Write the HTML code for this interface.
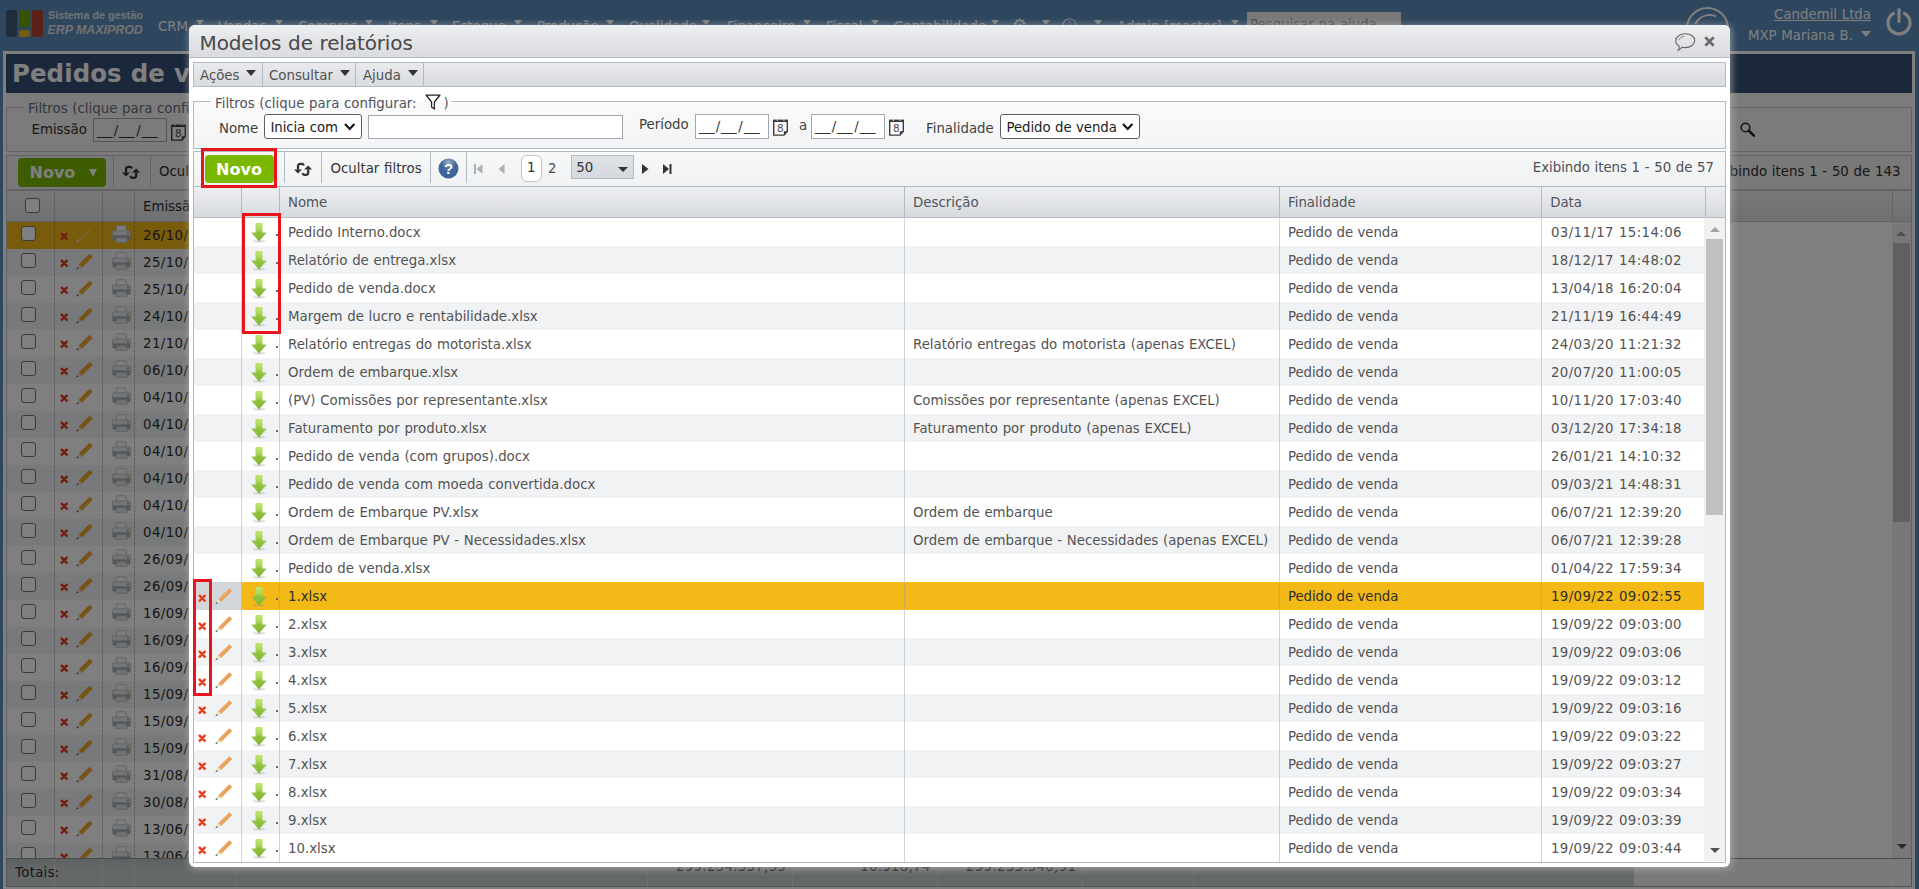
<!DOCTYPE html>
<html lang="pt-BR"><head><meta charset="utf-8"><title>Modelos de relatórios</title>
<style>
*{box-sizing:border-box;margin:0;padding:0}
html,body{width:1919px;height:889px;overflow:hidden}
body{position:relative;background:#5c8dbd;font-family:"DejaVu Sans",Verdana,"Liberation Sans",sans-serif;font-size:13.33px;color:#535353;word-spacing:.45px}
.ic{position:absolute;overflow:visible}
.abs{position:absolute}
/* ---------- background page ---------- */
#bg{position:absolute;left:0;top:0;width:1919px;height:889px;overflow:hidden}
#logo{position:absolute;left:6px;top:9px;width:38px;height:30px}
.lg1{position:absolute;left:48px;top:9px;font:bold 10.800px "Liberation Sans",sans-serif;color:#e4e4e4;white-space:nowrap;word-spacing:0}
.lg2{position:absolute;left:47.500px;top:23px;font:italic bold 12.400px "Liberation Sans",sans-serif;color:#e4e4e4;white-space:nowrap;word-spacing:0}
#nav{position:absolute;left:158px;top:18.500px;height:20px;white-space:nowrap;color:#fff;font-size:13.33px}
#nav span{position:absolute;top:0}
#nav i{position:absolute;top:1px;width:0;height:0;border-left:4.500px solid transparent;border-right:4.500px solid transparent;border-top:5px solid #fff}
#hsearch{position:absolute;left:1247px;top:12px;width:154px;height:24px;background:#f3f3f3;color:#999;font-size:13.33px;padding:5px 3px 0 3px}
#hcirc{position:absolute;left:1686px;top:7px;width:43px;height:43px;border:2px solid #fff;border-radius:50%}
#hcirc:after{content:"";position:absolute;left:5px;top:5px;width:29px;height:29px;border:2px solid transparent;border-top-color:#fff;border-radius:50%;transform:rotate(-20deg)}
#hcomp{position:absolute;right:48px;top:7px;color:#fff;text-decoration:underline;white-space:nowrap}
#huser{position:absolute;right:66px;top:28px;color:#fff;white-space:nowrap}
#hcaret{position:absolute;left:1861px;top:31px;width:0;height:0;border-left:5px solid transparent;border-right:5px solid transparent;border-top:6px solid #fff}
#panel{position:absolute;left:3px;top:51px;width:1912px;height:838px;border:3px solid #fff;border-right-width:2px;background:#f7f7f7}
#ptitle{position:absolute;left:0;top:0;width:1906px;height:39px;background:#365077;color:#fff;font-weight:bold;font-size:24.400px;line-height:39px;padding-left:6px;white-space:nowrap;letter-spacing:.1px}
.bfs{position:absolute;left:0px;top:53px;width:1906px;height:45px;border:1px solid #c6c6c6}
.bleg{position:absolute;left:17px;top:-7px;background:#f7f7f7;padding:0 4px;white-space:nowrap;color:#666d7b}
.btool{position:absolute;left:0px;top:101px;width:1906px;height:35px;border:1px solid #c5c5c5;background:#f3f3f4}
.bnovo{position:absolute;left:11px;top:2px;width:88px;height:29px;background:#7ab800;border-radius:4px;color:#fff;font-weight:bold;font-size:16px;line-height:29px;padding-left:11.5px}
.bnovo i{position:absolute;left:71px;top:11px;border-left:4.5px solid transparent;border-right:4.5px solid transparent;border-top:8px solid #fff;width:0;height:0}
.bsep{position:absolute;top:0;width:1px;height:31px;background:#c5c5c5}
.bhead{position:absolute;left:0px;top:136px;width:1906px;height:32px;border:1px solid #c5c5c5;background:linear-gradient(#f1f1f3,#dcdee2);}
.bhead b{position:absolute;top:0;width:1px;height:31px;background:#c5c5c5}
.bchk{position:absolute;left:14px;top:4px;width:15px;height:15px;border:1.5px solid #767676;border-radius:3px;background:#fff}
.bbody{position:absolute;left:0px;top:168px;width:1906px;height:636px;overflow:hidden;background:#fff;border-left:1px solid #c5c5c5;border-right:1px solid #c5c5c5}
.brow{position:absolute;left:0;width:1700px;height:27px;background:#fff}
.brow.balt{background:#f1f2f4}
.brow.bsel{background:#f3b917}
.bdate{position:absolute;left:136px;top:6px;white-space:nowrap;color:#2e2e2e;letter-spacing:.4px}
.bcols b{position:absolute;top:0;width:0;height:640px;border-left:1px dotted rgba(40,40,40,.42)}
.bfoot{position:absolute;left:0px;top:804px;width:1906px;height:29px;background:#f3f7f7;border:1px solid #a4a9a9;border-top-color:#8f9494;color:#2e2e2e}
.bft{position:absolute;left:0;top:0;width:1627px;height:27px;background:linear-gradient(#bcc2c2,#cad0d0 35%,#ccd2d2)}
.bfoot span{position:absolute;top:6px;white-space:nowrap;letter-spacing:.3px}
.bfoot b{position:absolute;top:0;width:0;height:28px;border-left:1px dotted rgba(255,255,255,.55)}
#ovl{position:absolute;left:0;top:0;width:1919px;height:889px;background:rgba(0,0,0,.5)}
/* ---------- dialog ---------- */
#dlg{position:absolute;left:189px;top:25px;width:1541px;height:842px;background:#fff;border-radius:6px;box-shadow:1px 1px 7px 1px rgba(190,190,190,.6)}
#tbar{position:absolute;left:0;top:0;width:1541px;height:33px;border-radius:6px 6px 0 0;background:linear-gradient(#eeeff0,#e4e5e8 45%,#d9dbdf);border-bottom:1px solid #b4bac3}
#ttl{position:absolute;left:10.500px;top:5px;font-size:20px;line-height:26px;color:#484848;white-space:nowrap;letter-spacing:-.12px}
#mbar{position:absolute;left:4px;top:37px;width:1533px;height:25px;border:1px solid #b4bac3;background:linear-gradient(#e9eaed,#d8dbdf)}
#mbar span{position:absolute;top:5px;white-space:nowrap;color:#505050}
#mbar i{position:absolute;top:7px;width:0;height:0;border-left:5.5px solid transparent;border-right:5.5px solid transparent;border-top:6px solid #333}
#mbar b{position:absolute;top:0;width:1px;height:23px;background:#b4bac3}
#fs{position:absolute;left:4px;top:76px;width:1533px;height:48px;border:1px solid #b4bac3;background:linear-gradient(#fafafb,#f3f4f5)}
#leg{position:absolute;left:17px;top:-6px;height:18px;background:linear-gradient(#fff 0,#fff 6px,rgba(255,255,255,0) 6px);padding:0 2.500px 0 4px;white-space:nowrap;color:#4f545d}
.lbl{position:absolute;white-space:nowrap;color:#3f3f3f}
.sl{position:absolute;height:25px;border:1px solid #5f5f5f;border-radius:3px;background:#fff;color:#1c1c1c;padding:4.500px 0 0 5.500px;white-space:nowrap;letter-spacing:-.1px}
.inp{position:absolute;height:25px;border:1px solid #a3a8b0;background:#fff;color:#333;white-space:nowrap;padding:2px 0 0 3px}
#tool{position:absolute;left:4px;top:126px;width:1533px;height:36px;border:1px solid #b4bac3;border-bottom:0;background:linear-gradient(#f7f8f8,#f0f1f2)}
#tool b{position:absolute;top:0;width:1px;height:31px;background:#b4bac3}
#novo{position:absolute;left:11px;top:3px;width:69px;height:28px;background:#7ab800;border-radius:4px;color:#fff;font-weight:bold;font-size:16px;line-height:29px;text-align:center;letter-spacing:.1px;text-indent:-1px}
#ocf{position:absolute;left:136.500px;top:9px;white-space:nowrap;color:#333}
#pgi{position:absolute;right:11px;top:8px;white-space:nowrap;color:#4c4f55;letter-spacing:-.02px}
#pg1{position:absolute;left:327px;top:3px;width:20.500px;height:27px;border:1px solid #c5c5c5;border-radius:6px;background:#fff;text-align:center;line-height:24px;color:#333}
#pg2{position:absolute;left:354px;top:8.500px;color:#4c4f55}
#pdd{position:absolute;left:377.300px;top:3px;width:62.700px;height:24px;border:1px solid #b4bac3;background:linear-gradient(#e0e2e6,#d5d8dd);color:#333;padding:4px 0 0 4px}
#pdd i{position:absolute;left:46px;top:11px;width:0;height:0;border-left:5.200px solid transparent;border-right:5.200px solid transparent;border-top:5px solid #333}
#ghead{position:absolute;left:4px;top:161px;width:1533px;height:32px;border:1px solid #b4bac3;background:linear-gradient(#edeef0,#e3e5e8 50%,#d6d9de);}
#ghead span{position:absolute;top:8px;white-space:nowrap;color:#4f545d}
#ghead b{position:absolute;top:0;width:1px;height:30px;background:#b4bac3}
#gbody{position:absolute;left:4px;top:193px;width:1533px;height:645px;border:1px solid #b4bac3;border-top:0;overflow:hidden;background:#fff}
.row{position:absolute;left:0;width:1510px;height:28px;background:#fff}
.row.alt{background:#f1f2f4}
.row.sel{background:#f3b917;color:#2e2e2e}
.row.sel .c1{background:#d3d6db}
.c{position:absolute;top:0;height:28px;line-height:30px;white-space:nowrap;overflow:hidden;padding-left:8px}
.c1{left:0;width:48px;padding:0}
.c2{left:48px;width:38px;padding:0}
.c3{left:86px;width:625px}
.c4{left:711px;width:375px}
.c5{left:1086px;width:262px;letter-spacing:-.1px}
.c6{left:1348px;width:162px;letter-spacing:.38px;padding-left:9px}
.dot{position:absolute;left:33.700px;top:16px;width:2px;height:2px;background:#6a6a6a}
#gcols b{position:absolute;top:0;width:1px;height:644px;background:rgba(150,157,170,.45)}
#sbar{position:absolute;left:1510px;top:0;width:21px;height:643px;background:#f1f1f1}
#sthumb{position:absolute;left:2px;top:21px;width:17px;height:276px;background:#c1c1c1}
.sup{position:absolute;left:5.500px;top:8.500px;width:0;height:0;border-left:5px solid transparent;border-right:5px solid transparent;border-bottom:5.5px solid #a3a3a3}
.sdn{position:absolute;left:5.500px;bottom:8px;width:0;height:0;border-left:5px solid transparent;border-right:5px solid transparent;border-top:5.5px solid #505050}
.red{position:absolute;border:3px solid #e8141c}

.us{display:inline-block;transform:scaleX(1.17);transform-origin:0 50%;margin-right:2.500px}
.sls{display:inline-block;margin:0 1px 0 1px}

</style></head>
<body>
<svg width="0" height="0" style="position:absolute">
<defs>
<linearGradient id="gdn" x1="0" y1="0" x2="0" y2="1"><stop offset="0" stop-color="#c0e474"/><stop offset=".35" stop-color="#a9d658"/><stop offset=".52" stop-color="#92c443"/><stop offset="1" stop-color="#7fb431"/></linearGradient>
<radialGradient id="ghelp" cx=".5" cy=".2" r=".8"><stop offset="0" stop-color="#9fb0c4"/><stop offset=".45" stop-color="#41689a"/><stop offset="1" stop-color="#3a6496"/></radialGradient>
<g id="i-down"><ellipse cx="8" cy="18.300" rx="6.500" ry="1.100" fill="#8a8a8a" opacity=".35"/><path d="M4.500 0h7v9.500h4.300L8 18.500 .2 9.500h4.300z" fill="url(#gdn)"/></g>
<g id="i-x"><path d="M1.700 1.700l5 5M6.700 1.700l-5 5" stroke="#f3a25e" stroke-width="3.300" stroke-linecap="round" opacity=".4"/><path d="M1.700 1.700l5 5M6.700 1.700l-5 5" stroke="#e8311c" stroke-width="2.250" stroke-linecap="round"/><circle cx="4.200" cy="4.200" r=".9" fill="#b04a1a" opacity=".55"/></g>
<g id="i-pencil"><path d="M13.600 1.100l2.800 2.700L5.900 14.400 3 11.700z" fill="#e9a25c"/><path d="M5.200 11l7.500-7.600" stroke="#f4c27a" stroke-width=".8" stroke-dasharray="1.200 1.400"/><path d="M3 11.700l2.900 2.700L.5 16.300z" fill="#d9e8ad"/><path d="M.5 16.300l.7-2 1.400 1.400z" fill="#555"/></g>
<g id="i-pencil2"><path d="M13.600 1.100l2.800 2.700L5.900 14.400 3 11.700z" fill="#f2ab2a" stroke="#e89a45" stroke-width=".7"/><path d="M5 10.800l7.500-7.800" stroke="#d98f12" stroke-width=".9" stroke-dasharray="1.500 1"/><path d="M3 11.700l2.900 2.700L.5 16.300z" fill="#e4e0cc"/><path d="M.5 16.300l.7-2 1.400 1.400z" fill="#3a3a3a"/></g>
<g id="i-pencil3"><path d="M1 16L15.500 2" stroke="#f5e6c8" stroke-width="1.100" stroke-dasharray="2 1.200" opacity=".8"/><path d="M1 16l2.200-2.200" stroke="#eee" stroke-width="1.600"/></g>
<g id="i-print"><path d="M5 .8h9.500l.8 6H4.200z" fill="#fbfbfb" stroke="#b9bcc0" stroke-width=".8"/><path d="M1.800 6.200h16.400c.9 0 1.300.5 1.300 1.300v4H.5v-4c0-.8.400-1.300 1.300-1.300z" fill="#e6e8ea" stroke="#aeb2b6" stroke-width=".7"/><path d="M.5 11h19v4.200c0 .6-.4 1-1 1h-17c-.6 0-1-.4-1-1z" fill="#a9b0b5"/><path d="M4.800 13.300h10.400l1 5H3.800z" fill="#dfe2e4" stroke="#b4b8bc" stroke-width=".7"/><rect x="16" y="8" width="1.600" height="1.500" fill="#5fb336"/><rect x="16" y="10.300" width="1.600" height="1.500" fill="#f0a030"/></g>
<g id="i-refresh" fill="#333"><path d="M0 6.600h8L4 10.500z"/><path d="M4 6.700V3.200C4 1.500 5 .9 6.500 .9H8c1 0 1.500.7 1.800 1.600" fill="none" stroke="#333" stroke-width="2.250"/><path d="M10.100 6.400h8L14.100 2.500z"/><path d="M14.200 6.300v3.200c0 1.700-1 2.300-2.500 2.300H10.200c-1 0-1.500-.7-1.800-1.600" fill="none" stroke="#333" stroke-width="2.250"/></g>
<g id="i-cal"><path d="M.7 1.500h13.600v11l-3.300 3.600H.7z" fill="#fff" stroke="#3c3c3c" stroke-width="1.400"/><rect x="0" y=".8" width="15" height="2.200" fill="#3c3c3c"/><rect x="3.700" y="0" width="1.100" height="2" fill="#c9ced6"/><rect x="10.400" y="0" width="1.100" height="2" fill="#c9ced6"/><path d="M14.500 12.300h-3.700v3.900z" fill="#3c3c3c"/></g>
<g id="i-funnel"><path d="M1 1h14l-5.600 7v7L6.600 13V8z" fill="#fff" stroke="#222" stroke-width="1.250" stroke-linejoin="round"/></g>
<g id="i-chev"><path d="M1 1l4.7 5L10.4 1" fill="none" stroke="#111" stroke-width="2.1"/></g>
<g id="i-chat"><path d="M10.5 .8c5.3 0 9.3 3 9.3 6.8s-4.3 7-9.6 7c-1 0-2-.1-3-.4-1 1.200-2.400 2.300-4 3 .8-1.200 1.200-2.600 1.100-4C2 11.800.700 9.800.700 7.700.7 3.800 5.200.8 10.500.8z" fill="none" stroke="#666" stroke-width="1.1"/><path d="M3.800 7.200c.3-2 2.600-3.500 5.600-3.900" fill="none" stroke="#777" stroke-width=".9"/></g>
<g id="i-close"><path d="M1.300 1.300l8.400 8.400M9.700 1.300L1.300 9.700" stroke="#6a6a6a" stroke-width="2.700"/></g>
<g id="i-mag"><circle cx="5.500" cy="5.500" r="4.300" fill="none" stroke="#222" stroke-width="1.500"/><path d="M8.800 8.800l5 4.800" stroke="#222" stroke-width="2.600" stroke-linecap="round"/></g>
<g id="i-power"><path d="M7.500 5.300a11 11 0 1 0 11 0" fill="none" stroke="#fff" stroke-width="3.200" stroke-linecap="round"/><path d="M13 1.500v12" stroke="#fff" stroke-width="3.200" stroke-linecap="round"/></g>
</defs>
</svg>
<div id="bg">
  <svg id="logo" viewBox="0 0 38 30"><rect x="0" y="1" width="11" height="27" rx="2.5" fill="#3c5878"/><rect x="13" y="1" width="11" height="17.300" rx="2.500" fill="#6ea600"/><rect x="13" y="21" width="11" height="7" rx="2.500" fill="#f3b917"/><rect x="26" y="1" width="11" height="27" rx="2.5" fill="#b5452d"/></svg>
  <div class="lg1">Sistema de gestão</div>
  <div class="lg2">ERP MAXIPROD</div>
  <div id="nav">
    <span style="left:0px">CRM</span><i style="left:38.3px"></i>
    <span style="left:60px">Vendas</span><i style="left:116.5px"></i>
    <span style="left:140px">Compras</span><i style="left:206.5px"></i>
    <span style="left:230px">Itens</span><i style="left:271.5px"></i>
    <span style="left:294px">Estoque</span><i style="left:355.8px"></i>
    <span style="left:379px">Produção</span><i style="left:447.5px"></i>
    <span style="left:471px">Qualidade</span><i style="left:544.2px"></i>
    <span style="left:569px">Financeiro</span><i style="left:644.8px"></i>
    <span style="left:668px">Fiscal</span><i style="left:712.5px"></i>
    <span style="left:736px">Contabilidade</span><i style="left:833.2px"></i>
    <span style="left:854px;font-size:17px;top:-4px">⚙</span><i style="left:884.2px"></i>
    <span style="left:904px;font-size:15px;top:-2px">ⓘ</span><i style="left:935.8px"></i>
    <span style="left:959px">Admin [master]</span><i style="left:1072.5px"></i>
  </div>
  <div id="hsearch">Pesquisar na ajuda</div>
  <div id="hcirc"></div>
  <div id="hcomp">Candemil Ltda</div>
  <div id="huser">MXP Mariana B.</div>
  <div id="hcaret"></div>
  <svg class="ic" width="26" height="30" style="left:1886px;top:8px"><use href="#i-power"/></svg>
  <div id="panel">
    <div id="ptitle">Pedidos de venda</div>
    <div class="bfs"><div class="bleg">Filtros (clique para configurar:</div>
      <span class="lbl" style="left:24.500px;top:13.500px;color:#2e2e2e">Emissão</span>
      <div class="inp" style="left:86px;top:10px;width:74px;height:24px;background:#f7f7f7;padding-top:4px"><span class="us">__</span><span class="sls">/</span><span class="us">__</span><span class="sls">/</span><span class="us">__</span></div>
      <svg class="ic" width="15" height="17" style="left:163.7px;top:15.5px"><use href="#i-cal"/><text x="7.300" y="13.400" font-size="10.500" text-anchor="middle" fill="#4a4a4a" font-family="DejaVu Sans,sans-serif">8</text></svg>
      <svg class="ic" width="16" height="16" style="left:1733px;top:14px"><use href="#i-mag"/></svg>
      <div class="bsep" style="left:1722px;top:8px;height:30px"></div>
    </div>
    <div class="btool">
      <div class="bnovo">Novo<i></i></div>
      <div class="bsep" style="left:106px"></div>
      <svg class="ic" width="19" height="13" style="left:115.300px;top:9.500px"><use href="#i-refresh"/></svg>
      <div class="bsep" style="left:143px"></div>
      <span class="lbl" style="left:152px;top:8px;color:#2e2e2e">Ocultar filtros</span>
      <span class="lbl" style="right:10.500px;top:8px;color:#2e2e2e;letter-spacing:.02px">Exibindo itens 1 - 50 de 143</span>
    </div>
    <div class="bhead"><span class="bchk" style="left:18px;top:7px"></span><b style="left:47px"></b><b style="left:95px"></b><b style="left:127px"></b><b style="left:1885px"></b>
      <span class="lbl" style="left:136px;top:7.500px;color:#2e2e2e">Emissão</span></div>
    <div class="bbody">
<div class="brow bsel" style="top:0px"><span class="bchk"></span><svg class="ic" width="9" height="9" style="left:52.700px;top:10.300px"><use href="#i-x"/></svg><svg class="ic" width="18" height="18" style="left:69px;top:4px"><use href="#i-pencil3"/></svg><svg class="ic" width="20" height="20" style="left:104.600px;top:3.200px;transform:scale(.95);transform-origin:0 0"><use href="#i-print"/></svg><span class="bdate">26/10/</span></div>
<div class="brow balt" style="top:27px"><span class="bchk"></span><svg class="ic" width="9" height="9" style="left:52.700px;top:10.300px"><use href="#i-x"/></svg><svg class="ic" width="18" height="18" style="left:69px;top:4px"><use href="#i-pencil2"/></svg><svg class="ic" width="20" height="20" style="left:104.600px;top:3.200px;transform:scale(.95);transform-origin:0 0"><use href="#i-print"/></svg><span class="bdate">25/10/</span></div>
<div class="brow" style="top:54px"><span class="bchk"></span><svg class="ic" width="9" height="9" style="left:52.700px;top:10.300px"><use href="#i-x"/></svg><svg class="ic" width="18" height="18" style="left:69px;top:4px"><use href="#i-pencil2"/></svg><svg class="ic" width="20" height="20" style="left:104.600px;top:3.200px;transform:scale(.95);transform-origin:0 0"><use href="#i-print"/></svg><span class="bdate">25/10/</span></div>
<div class="brow balt" style="top:81px"><span class="bchk"></span><svg class="ic" width="9" height="9" style="left:52.700px;top:10.300px"><use href="#i-x"/></svg><svg class="ic" width="18" height="18" style="left:69px;top:4px"><use href="#i-pencil2"/></svg><svg class="ic" width="20" height="20" style="left:104.600px;top:3.200px;transform:scale(.95);transform-origin:0 0"><use href="#i-print"/></svg><span class="bdate">24/10/</span></div>
<div class="brow" style="top:108px"><span class="bchk"></span><svg class="ic" width="9" height="9" style="left:52.700px;top:10.300px"><use href="#i-x"/></svg><svg class="ic" width="18" height="18" style="left:69px;top:4px"><use href="#i-pencil2"/></svg><svg class="ic" width="20" height="20" style="left:104.600px;top:3.200px;transform:scale(.95);transform-origin:0 0"><use href="#i-print"/></svg><span class="bdate">21/10/</span></div>
<div class="brow balt" style="top:135px"><span class="bchk"></span><svg class="ic" width="9" height="9" style="left:52.700px;top:10.300px"><use href="#i-x"/></svg><svg class="ic" width="18" height="18" style="left:69px;top:4px"><use href="#i-pencil2"/></svg><svg class="ic" width="20" height="20" style="left:104.600px;top:3.200px;transform:scale(.95);transform-origin:0 0"><use href="#i-print"/></svg><span class="bdate">06/10/</span></div>
<div class="brow" style="top:162px"><span class="bchk"></span><svg class="ic" width="9" height="9" style="left:52.700px;top:10.300px"><use href="#i-x"/></svg><svg class="ic" width="18" height="18" style="left:69px;top:4px"><use href="#i-pencil2"/></svg><svg class="ic" width="20" height="20" style="left:104.600px;top:3.200px;transform:scale(.95);transform-origin:0 0"><use href="#i-print"/></svg><span class="bdate">04/10/</span></div>
<div class="brow balt" style="top:189px"><span class="bchk"></span><svg class="ic" width="9" height="9" style="left:52.700px;top:10.300px"><use href="#i-x"/></svg><svg class="ic" width="18" height="18" style="left:69px;top:4px"><use href="#i-pencil2"/></svg><svg class="ic" width="20" height="20" style="left:104.600px;top:3.200px;transform:scale(.95);transform-origin:0 0"><use href="#i-print"/></svg><span class="bdate">04/10/</span></div>
<div class="brow" style="top:216px"><span class="bchk"></span><svg class="ic" width="9" height="9" style="left:52.700px;top:10.300px"><use href="#i-x"/></svg><svg class="ic" width="18" height="18" style="left:69px;top:4px"><use href="#i-pencil2"/></svg><svg class="ic" width="20" height="20" style="left:104.600px;top:3.200px;transform:scale(.95);transform-origin:0 0"><use href="#i-print"/></svg><span class="bdate">04/10/</span></div>
<div class="brow balt" style="top:243px"><span class="bchk"></span><svg class="ic" width="9" height="9" style="left:52.700px;top:10.300px"><use href="#i-x"/></svg><svg class="ic" width="18" height="18" style="left:69px;top:4px"><use href="#i-pencil2"/></svg><svg class="ic" width="20" height="20" style="left:104.600px;top:3.200px;transform:scale(.95);transform-origin:0 0"><use href="#i-print"/></svg><span class="bdate">04/10/</span></div>
<div class="brow" style="top:270px"><span class="bchk"></span><svg class="ic" width="9" height="9" style="left:52.700px;top:10.300px"><use href="#i-x"/></svg><svg class="ic" width="18" height="18" style="left:69px;top:4px"><use href="#i-pencil2"/></svg><svg class="ic" width="20" height="20" style="left:104.600px;top:3.200px;transform:scale(.95);transform-origin:0 0"><use href="#i-print"/></svg><span class="bdate">04/10/</span></div>
<div class="brow balt" style="top:297px"><span class="bchk"></span><svg class="ic" width="9" height="9" style="left:52.700px;top:10.300px"><use href="#i-x"/></svg><svg class="ic" width="18" height="18" style="left:69px;top:4px"><use href="#i-pencil2"/></svg><svg class="ic" width="20" height="20" style="left:104.600px;top:3.200px;transform:scale(.95);transform-origin:0 0"><use href="#i-print"/></svg><span class="bdate">04/10/</span></div>
<div class="brow" style="top:324px"><span class="bchk"></span><svg class="ic" width="9" height="9" style="left:52.700px;top:10.300px"><use href="#i-x"/></svg><svg class="ic" width="18" height="18" style="left:69px;top:4px"><use href="#i-pencil2"/></svg><svg class="ic" width="20" height="20" style="left:104.600px;top:3.200px;transform:scale(.95);transform-origin:0 0"><use href="#i-print"/></svg><span class="bdate">26/09/</span></div>
<div class="brow balt" style="top:351px"><span class="bchk"></span><svg class="ic" width="9" height="9" style="left:52.700px;top:10.300px"><use href="#i-x"/></svg><svg class="ic" width="18" height="18" style="left:69px;top:4px"><use href="#i-pencil2"/></svg><svg class="ic" width="20" height="20" style="left:104.600px;top:3.200px;transform:scale(.95);transform-origin:0 0"><use href="#i-print"/></svg><span class="bdate">26/09/</span></div>
<div class="brow" style="top:378px"><span class="bchk"></span><svg class="ic" width="9" height="9" style="left:52.700px;top:10.300px"><use href="#i-x"/></svg><svg class="ic" width="18" height="18" style="left:69px;top:4px"><use href="#i-pencil2"/></svg><svg class="ic" width="20" height="20" style="left:104.600px;top:3.200px;transform:scale(.95);transform-origin:0 0"><use href="#i-print"/></svg><span class="bdate">16/09/</span></div>
<div class="brow balt" style="top:405px"><span class="bchk"></span><svg class="ic" width="9" height="9" style="left:52.700px;top:10.300px"><use href="#i-x"/></svg><svg class="ic" width="18" height="18" style="left:69px;top:4px"><use href="#i-pencil2"/></svg><svg class="ic" width="20" height="20" style="left:104.600px;top:3.200px;transform:scale(.95);transform-origin:0 0"><use href="#i-print"/></svg><span class="bdate">16/09/</span></div>
<div class="brow" style="top:432px"><span class="bchk"></span><svg class="ic" width="9" height="9" style="left:52.700px;top:10.300px"><use href="#i-x"/></svg><svg class="ic" width="18" height="18" style="left:69px;top:4px"><use href="#i-pencil2"/></svg><svg class="ic" width="20" height="20" style="left:104.600px;top:3.200px;transform:scale(.95);transform-origin:0 0"><use href="#i-print"/></svg><span class="bdate">16/09/</span></div>
<div class="brow balt" style="top:459px"><span class="bchk"></span><svg class="ic" width="9" height="9" style="left:52.700px;top:10.300px"><use href="#i-x"/></svg><svg class="ic" width="18" height="18" style="left:69px;top:4px"><use href="#i-pencil2"/></svg><svg class="ic" width="20" height="20" style="left:104.600px;top:3.200px;transform:scale(.95);transform-origin:0 0"><use href="#i-print"/></svg><span class="bdate">15/09/</span></div>
<div class="brow" style="top:486px"><span class="bchk"></span><svg class="ic" width="9" height="9" style="left:52.700px;top:10.300px"><use href="#i-x"/></svg><svg class="ic" width="18" height="18" style="left:69px;top:4px"><use href="#i-pencil2"/></svg><svg class="ic" width="20" height="20" style="left:104.600px;top:3.200px;transform:scale(.95);transform-origin:0 0"><use href="#i-print"/></svg><span class="bdate">15/09/</span></div>
<div class="brow balt" style="top:513px"><span class="bchk"></span><svg class="ic" width="9" height="9" style="left:52.700px;top:10.300px"><use href="#i-x"/></svg><svg class="ic" width="18" height="18" style="left:69px;top:4px"><use href="#i-pencil2"/></svg><svg class="ic" width="20" height="20" style="left:104.600px;top:3.200px;transform:scale(.95);transform-origin:0 0"><use href="#i-print"/></svg><span class="bdate">15/09/</span></div>
<div class="brow" style="top:540px"><span class="bchk"></span><svg class="ic" width="9" height="9" style="left:52.700px;top:10.300px"><use href="#i-x"/></svg><svg class="ic" width="18" height="18" style="left:69px;top:4px"><use href="#i-pencil2"/></svg><svg class="ic" width="20" height="20" style="left:104.600px;top:3.200px;transform:scale(.95);transform-origin:0 0"><use href="#i-print"/></svg><span class="bdate">31/08/</span></div>
<div class="brow balt" style="top:567px"><span class="bchk"></span><svg class="ic" width="9" height="9" style="left:52.700px;top:10.300px"><use href="#i-x"/></svg><svg class="ic" width="18" height="18" style="left:69px;top:4px"><use href="#i-pencil2"/></svg><svg class="ic" width="20" height="20" style="left:104.600px;top:3.200px;transform:scale(.95);transform-origin:0 0"><use href="#i-print"/></svg><span class="bdate">30/08/</span></div>
<div class="brow" style="top:594px"><span class="bchk"></span><svg class="ic" width="9" height="9" style="left:52.700px;top:10.300px"><use href="#i-x"/></svg><svg class="ic" width="18" height="18" style="left:69px;top:4px"><use href="#i-pencil2"/></svg><svg class="ic" width="20" height="20" style="left:104.600px;top:3.200px;transform:scale(.95);transform-origin:0 0"><use href="#i-print"/></svg><span class="bdate">13/06/</span></div>
<div class="brow balt" style="top:621px"><span class="bchk"></span><svg class="ic" width="9" height="9" style="left:52.700px;top:10.300px"><use href="#i-x"/></svg><svg class="ic" width="18" height="18" style="left:69px;top:4px"><use href="#i-pencil2"/></svg><svg class="ic" width="20" height="20" style="left:104.600px;top:3.200px;transform:scale(.95);transform-origin:0 0"><use href="#i-print"/></svg><span class="bdate">13/06/</span></div>
      <div class="bcols"><b style="left:47px"></b><b style="left:95px"></b><b style="left:127px"></b></div>
      <div class="abs" style="left:1885px;top:0;width:21px;height:640px;background:#f1f1f1"><div class="sup" style="border-bottom-color:#a3a3a3;left:4px"></div><div class="abs" style="left:1px;top:21px;width:17px;height:279px;background:#c1c1c1"></div><div class="sdn" style="bottom:13px;left:4.500px"></div></div>
    </div>
    <div class="bfoot"><div class="bft"></div><span style="left:8px">Totais:</span><b style="left:47px"></b><b style="left:95px"></b><b style="left:127px"></b><b style="left:228px"></b>
      <b style="left:640px"></b><b style="left:785px"></b><b style="left:930px"></b><b style="left:1075px"></b><b style="left:1186px"></b><b style="left:1885px"></b>
      <span style="left:669px;top:0px">299.254.337,55</span><span style="left:848px;top:0px">-16.918,74</span><span style="left:959px;top:0px">299.233.540,91</span></div>
  </div>
</div>
<div id="ovl"></div>
<div id="dlg">
  <div id="tbar"><div id="ttl">Modelos de relatórios</div>
    <svg class="ic" width="21" height="19" style="left:1486px;top:8px"><use href="#i-chat"/></svg>
    <svg class="ic" width="11" height="11" style="left:1515px;top:11px"><use href="#i-close"/></svg>
  </div>
  <div id="mbar">
    <span style="left:6px">Ações</span><i style="left:52px"></i><b style="left:68px"></b>
    <span style="left:75px">Consultar</span><i style="left:146px"></i><b style="left:161px"></b>
    <span style="left:169px">Ajuda</span><i style="left:214px"></i><b style="left:229px"></b>
  </div>
  <div id="fs">
    <div id="leg">Filtros (clique para configurar: <svg class="ic" width="16" height="16" style="left:213.500px;top:-2px"><use href="#i-funnel"/></svg><span style="margin-left:22.300px">)</span></div>
    <span class="lbl" style="left:25px;top:19px">Nome</span>
    <div class="sl" style="left:70px;top:12px;width:98px">Inicia com<svg class="ic" width="12" height="8" style="left:78.500px;top:8px"><use href="#i-chev"/></svg></div>
    <div class="inp" style="left:174px;top:12.500px;width:255px;height:24px"></div>
    <span class="lbl" style="left:445px;top:15px">Período</span>
    <div class="inp" style="left:501px;top:12px;width:74px;padding-top:4px"><span class="us">__</span><span class="sls">/</span><span class="us">__</span><span class="sls">/</span><span class="us">__</span></div>
    <svg class="ic" width="15" height="17" style="left:579.3px;top:17.3px"><use href="#i-cal"/><text x="7.300" y="13.400" font-size="10.500" text-anchor="middle" fill="#4a4a4a" font-family="DejaVu Sans,sans-serif">8</text></svg>
    <span class="lbl" style="left:605px;top:16px">a</span>
    <div class="inp" style="left:617px;top:12px;width:74px;padding-top:4px"><span class="us">__</span><span class="sls">/</span><span class="us">__</span><span class="sls">/</span><span class="us">__</span></div>
    <svg class="ic" width="15" height="17" style="left:695px;top:17.3px"><use href="#i-cal"/><text x="7.300" y="13.400" font-size="10.500" text-anchor="middle" fill="#4a4a4a" font-family="DejaVu Sans,sans-serif">8</text></svg>
    <span class="lbl" style="left:732px;top:19px">Finalidade</span>
    <div class="sl" style="left:806px;top:12px;width:140px">Pedido de venda<svg class="ic" width="12" height="8" style="left:121px;top:8px"><use href="#i-chev"/></svg></div>
  </div>
  <div id="tool">
    <div id="novo">Novo</div>
    <b style="left:90px"></b>
    <svg class="ic" width="19" height="13" style="left:100px;top:10.500px"><use href="#i-refresh"/></svg>
    <b style="left:127px"></b>
    <span id="ocf">Ocultar filtros</span>
    <b style="left:236px"></b>
    <svg class="ic" width="21" height="21" style="left:243.500px;top:5.700px"><circle cx="10.5" cy="10.5" r="10" fill="url(#ghelp)"/><text x="10.5" y="16" font-size="15" font-weight="bold" text-anchor="middle" fill="#fff" font-family="Liberation Sans,sans-serif">?</text></svg>
    <b style="left:272px"></b>
    <svg class="ic" width="9" height="10" style="left:280px;top:12px"><path d="M0 0h2v10H0zM8.500 0v10L2.500 5z" fill="#adb0b5"/></svg>
    <svg class="ic" width="7" height="10" style="left:304px;top:12px"><path d="M6.500 0v10L.5 5z" fill="#adb0b5"/></svg>
    <div id="pg1">1</div><span id="pg2">2</span>
    <div id="pdd">50<i></i></div>
    <svg class="ic" width="7" height="10" style="left:448px;top:12px"><path d="M0 0v10L6.500 5z" fill="#333"/></svg>
    <svg class="ic" width="9" height="10" style="left:469px;top:12px"><path d="M0 0v10L6 5zM6.500 0h2v10h-2z" fill="#333"/></svg>
    <span id="pgi">Exibindo itens 1 - 50 de 57</span>
  </div>
  <div id="ghead"><b style="left:47px"></b><b style="left:85px"></b><span style="left:94px">Nome</span><b style="left:710px"></b><span style="left:719px">Descrição</span><b style="left:1085px"></b><span style="left:1094px">Finalidade</span><b style="left:1347px"></b><span style="left:1356.200px">Data</span><b style="left:1511px"></b></div>
  <div id="gbody">
<div class="row" style="top:0px"><div class="c c1"></div><div class="c c2"><svg class="ic" width="17" height="20" style="left:8.900px;top:5px"><use href="#i-down"/></svg><i class="dot"></i></div><div class="c c3">Pedido Interno.docx</div><div class="c c4"></div><div class="c c5">Pedido de venda</div><div class="c c6">03/11/17 15:14:06</div></div>
<div class="row alt" style="top:28px"><div class="c c1"></div><div class="c c2"><svg class="ic" width="17" height="20" style="left:8.900px;top:5px"><use href="#i-down"/></svg><i class="dot"></i></div><div class="c c3">Relatório de entrega.xlsx</div><div class="c c4"></div><div class="c c5">Pedido de venda</div><div class="c c6">18/12/17 14:48:02</div></div>
<div class="row" style="top:56px"><div class="c c1"></div><div class="c c2"><svg class="ic" width="17" height="20" style="left:8.900px;top:5px"><use href="#i-down"/></svg><i class="dot"></i></div><div class="c c3">Pedido de venda.docx</div><div class="c c4"></div><div class="c c5">Pedido de venda</div><div class="c c6">13/04/18 16:20:04</div></div>
<div class="row alt" style="top:84px"><div class="c c1"></div><div class="c c2"><svg class="ic" width="17" height="20" style="left:8.900px;top:5px"><use href="#i-down"/></svg><i class="dot"></i></div><div class="c c3">Margem de lucro e rentabilidade.xlsx</div><div class="c c4"></div><div class="c c5">Pedido de venda</div><div class="c c6">21/11/19 16:44:49</div></div>
<div class="row" style="top:112px"><div class="c c1"></div><div class="c c2"><svg class="ic" width="17" height="20" style="left:8.900px;top:5px"><use href="#i-down"/></svg><i class="dot"></i></div><div class="c c3">Relatório entregas do motorista.xlsx</div><div class="c c4">Relatório entregas do motorista (apenas EXCEL)</div><div class="c c5">Pedido de venda</div><div class="c c6">24/03/20 11:21:32</div></div>
<div class="row alt" style="top:140px"><div class="c c1"></div><div class="c c2"><svg class="ic" width="17" height="20" style="left:8.900px;top:5px"><use href="#i-down"/></svg><i class="dot"></i></div><div class="c c3">Ordem de embarque.xlsx</div><div class="c c4"></div><div class="c c5">Pedido de venda</div><div class="c c6">20/07/20 11:00:05</div></div>
<div class="row" style="top:168px"><div class="c c1"></div><div class="c c2"><svg class="ic" width="17" height="20" style="left:8.900px;top:5px"><use href="#i-down"/></svg><i class="dot"></i></div><div class="c c3">(PV) Comissões por representante.xlsx</div><div class="c c4">Comissões por representante (apenas EXCEL)</div><div class="c c5">Pedido de venda</div><div class="c c6">10/11/20 17:03:40</div></div>
<div class="row alt" style="top:196px"><div class="c c1"></div><div class="c c2"><svg class="ic" width="17" height="20" style="left:8.900px;top:5px"><use href="#i-down"/></svg><i class="dot"></i></div><div class="c c3">Faturamento por produto.xlsx</div><div class="c c4">Faturamento por produto (apenas EXCEL)</div><div class="c c5">Pedido de venda</div><div class="c c6">03/12/20 17:34:18</div></div>
<div class="row" style="top:224px"><div class="c c1"></div><div class="c c2"><svg class="ic" width="17" height="20" style="left:8.900px;top:5px"><use href="#i-down"/></svg><i class="dot"></i></div><div class="c c3">Pedido de venda (com grupos).docx</div><div class="c c4"></div><div class="c c5">Pedido de venda</div><div class="c c6">26/01/21 14:10:32</div></div>
<div class="row alt" style="top:252px"><div class="c c1"></div><div class="c c2"><svg class="ic" width="17" height="20" style="left:8.900px;top:5px"><use href="#i-down"/></svg><i class="dot"></i></div><div class="c c3">Pedido de venda com moeda convertida.docx</div><div class="c c4"></div><div class="c c5">Pedido de venda</div><div class="c c6">09/03/21 14:48:31</div></div>
<div class="row" style="top:280px"><div class="c c1"></div><div class="c c2"><svg class="ic" width="17" height="20" style="left:8.900px;top:5px"><use href="#i-down"/></svg><i class="dot"></i></div><div class="c c3">Ordem de Embarque PV.xlsx</div><div class="c c4">Ordem de embarque</div><div class="c c5">Pedido de venda</div><div class="c c6">06/07/21 12:39:20</div></div>
<div class="row alt" style="top:308px"><div class="c c1"></div><div class="c c2"><svg class="ic" width="17" height="20" style="left:8.900px;top:5px"><use href="#i-down"/></svg><i class="dot"></i></div><div class="c c3">Ordem de Embarque PV - Necessidades.xlsx</div><div class="c c4">Ordem de embarque - Necessidades (apenas EXCEL)</div><div class="c c5">Pedido de venda</div><div class="c c6">06/07/21 12:39:28</div></div>
<div class="row" style="top:336px"><div class="c c1"></div><div class="c c2"><svg class="ic" width="17" height="20" style="left:8.900px;top:5px"><use href="#i-down"/></svg><i class="dot"></i></div><div class="c c3">Pedido de venda.xlsx</div><div class="c c4"></div><div class="c c5">Pedido de venda</div><div class="c c6">01/04/22 17:59:34</div></div>
<div class="row alt sel" style="top:364px"><div class="c c1"><svg class="ic" width="9" height="9" style="left:4.300px;top:11.700px"><use href="#i-x"/></svg><svg class="ic" width="18" height="18" style="left:20.800px;top:5px;transform:scale(1.05);transform-origin:0 0"><use href="#i-pencil"/></svg></div><div class="c c2"><svg class="ic" width="17" height="20" style="left:8.900px;top:5px"><use href="#i-down"/></svg><i class="dot"></i></div><div class="c c3">1.xlsx</div><div class="c c4"></div><div class="c c5">Pedido de venda</div><div class="c c6">19/09/22 09:02:55</div></div>
<div class="row" style="top:392px"><div class="c c1"><svg class="ic" width="9" height="9" style="left:4.300px;top:11.700px"><use href="#i-x"/></svg><svg class="ic" width="18" height="18" style="left:20.800px;top:5px;transform:scale(1.05);transform-origin:0 0"><use href="#i-pencil"/></svg></div><div class="c c2"><svg class="ic" width="17" height="20" style="left:8.900px;top:5px"><use href="#i-down"/></svg><i class="dot"></i></div><div class="c c3">2.xlsx</div><div class="c c4"></div><div class="c c5">Pedido de venda</div><div class="c c6">19/09/22 09:03:00</div></div>
<div class="row alt" style="top:420px"><div class="c c1"><svg class="ic" width="9" height="9" style="left:4.300px;top:11.700px"><use href="#i-x"/></svg><svg class="ic" width="18" height="18" style="left:20.800px;top:5px;transform:scale(1.05);transform-origin:0 0"><use href="#i-pencil"/></svg></div><div class="c c2"><svg class="ic" width="17" height="20" style="left:8.900px;top:5px"><use href="#i-down"/></svg><i class="dot"></i></div><div class="c c3">3.xlsx</div><div class="c c4"></div><div class="c c5">Pedido de venda</div><div class="c c6">19/09/22 09:03:06</div></div>
<div class="row" style="top:448px"><div class="c c1"><svg class="ic" width="9" height="9" style="left:4.300px;top:11.700px"><use href="#i-x"/></svg><svg class="ic" width="18" height="18" style="left:20.800px;top:5px;transform:scale(1.05);transform-origin:0 0"><use href="#i-pencil"/></svg></div><div class="c c2"><svg class="ic" width="17" height="20" style="left:8.900px;top:5px"><use href="#i-down"/></svg><i class="dot"></i></div><div class="c c3">4.xlsx</div><div class="c c4"></div><div class="c c5">Pedido de venda</div><div class="c c6">19/09/22 09:03:12</div></div>
<div class="row alt" style="top:476px"><div class="c c1"><svg class="ic" width="9" height="9" style="left:4.300px;top:11.700px"><use href="#i-x"/></svg><svg class="ic" width="18" height="18" style="left:20.800px;top:5px;transform:scale(1.05);transform-origin:0 0"><use href="#i-pencil"/></svg></div><div class="c c2"><svg class="ic" width="17" height="20" style="left:8.900px;top:5px"><use href="#i-down"/></svg><i class="dot"></i></div><div class="c c3">5.xlsx</div><div class="c c4"></div><div class="c c5">Pedido de venda</div><div class="c c6">19/09/22 09:03:16</div></div>
<div class="row" style="top:504px"><div class="c c1"><svg class="ic" width="9" height="9" style="left:4.300px;top:11.700px"><use href="#i-x"/></svg><svg class="ic" width="18" height="18" style="left:20.800px;top:5px;transform:scale(1.05);transform-origin:0 0"><use href="#i-pencil"/></svg></div><div class="c c2"><svg class="ic" width="17" height="20" style="left:8.900px;top:5px"><use href="#i-down"/></svg><i class="dot"></i></div><div class="c c3">6.xlsx</div><div class="c c4"></div><div class="c c5">Pedido de venda</div><div class="c c6">19/09/22 09:03:22</div></div>
<div class="row alt" style="top:532px"><div class="c c1"><svg class="ic" width="9" height="9" style="left:4.300px;top:11.700px"><use href="#i-x"/></svg><svg class="ic" width="18" height="18" style="left:20.800px;top:5px;transform:scale(1.05);transform-origin:0 0"><use href="#i-pencil"/></svg></div><div class="c c2"><svg class="ic" width="17" height="20" style="left:8.900px;top:5px"><use href="#i-down"/></svg><i class="dot"></i></div><div class="c c3">7.xlsx</div><div class="c c4"></div><div class="c c5">Pedido de venda</div><div class="c c6">19/09/22 09:03:27</div></div>
<div class="row" style="top:560px"><div class="c c1"><svg class="ic" width="9" height="9" style="left:4.300px;top:11.700px"><use href="#i-x"/></svg><svg class="ic" width="18" height="18" style="left:20.800px;top:5px;transform:scale(1.05);transform-origin:0 0"><use href="#i-pencil"/></svg></div><div class="c c2"><svg class="ic" width="17" height="20" style="left:8.900px;top:5px"><use href="#i-down"/></svg><i class="dot"></i></div><div class="c c3">8.xlsx</div><div class="c c4"></div><div class="c c5">Pedido de venda</div><div class="c c6">19/09/22 09:03:34</div></div>
<div class="row alt" style="top:588px"><div class="c c1"><svg class="ic" width="9" height="9" style="left:4.300px;top:11.700px"><use href="#i-x"/></svg><svg class="ic" width="18" height="18" style="left:20.800px;top:5px;transform:scale(1.05);transform-origin:0 0"><use href="#i-pencil"/></svg></div><div class="c c2"><svg class="ic" width="17" height="20" style="left:8.900px;top:5px"><use href="#i-down"/></svg><i class="dot"></i></div><div class="c c3">9.xlsx</div><div class="c c4"></div><div class="c c5">Pedido de venda</div><div class="c c6">19/09/22 09:03:39</div></div>
<div class="row" style="top:616px"><div class="c c1"><svg class="ic" width="9" height="9" style="left:4.300px;top:11.700px"><use href="#i-x"/></svg><svg class="ic" width="18" height="18" style="left:20.800px;top:5px;transform:scale(1.05);transform-origin:0 0"><use href="#i-pencil"/></svg></div><div class="c c2"><svg class="ic" width="17" height="20" style="left:8.900px;top:5px"><use href="#i-down"/></svg><i class="dot"></i></div><div class="c c3">10.xlsx</div><div class="c c4"></div><div class="c c5">Pedido de venda</div><div class="c c6">19/09/22 09:03:44</div></div>
    <div id="gcols"><b style="left:47px"></b><b style="left:85px"></b><b style="left:710px"></b><b style="left:1085px"></b><b style="left:1347px"></b></div>
    <div id="sbar"><div class="sup"></div><div id="sthumb"></div><div class="sdn"></div></div>
  </div>
  <div class="red" style="left:12px;top:123px;width:76px;height:40px"></div>
  <div class="red" style="left:53px;top:188px;width:39px;height:121px"></div>
  <div class="red" style="left:4px;top:554px;width:19px;height:117px"></div>
</div>

</body></html>
